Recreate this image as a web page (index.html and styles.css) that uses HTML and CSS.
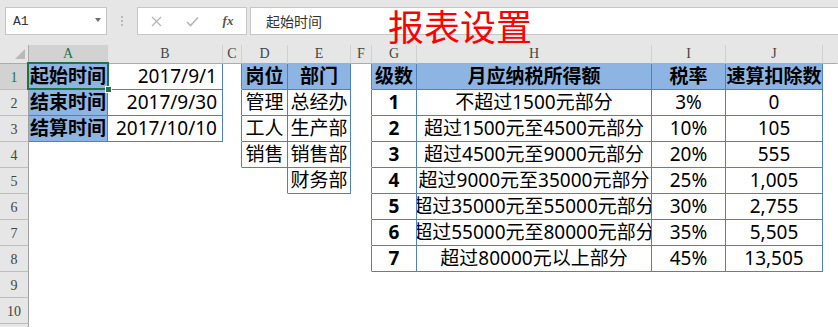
FILE: index.html
```html
<!DOCTYPE html>
<html lang="zh-CN">
<head>
<meta charset="utf-8">
<title>报表设置</title>
<link rel="stylesheet" href="styles.css">
</head>
<body>
<div class="app">
  <div class="fbar">
    <div class="namebox"><span>A1</span><span class="arrow"></span></div>
    <div class="dots"><i></i><i></i><i></i></div>
    <div class="fbtns">
      <span class="fb"><svg width="11" height="11" viewBox="0 0 11 11"><path d="M1 1L10 10M10 1L1 10" stroke="#b5b5b5" stroke-width="1.3" fill="none"/></svg></span>
      <span class="fb"><svg width="13" height="11" viewBox="0 0 13 11"><path d="M1 6L4.5 9.5L12 1.5" stroke="#b5b5b5" stroke-width="1.6" fill="none"/></svg></span>
      <span class="fb fx">fx</span>
    </div>
    <div class="finput">起始时间</div>
  </div>

  <div class="title">报表设置</div>

  <div class="sheet">
    <div class="row hdr">
      <div class="c ch corner"><svg width="10" height="10" viewBox="0 0 10 10"><polygon points="10,0 10,10 0,10" fill="#b9b9b9"/></svg></div>
      <div class="c ch sel-col">A</div>
      <div class="c ch">B</div>
      <div class="c ch">C</div>
      <div class="c ch">D</div>
      <div class="c ch">E</div>
      <div class="c ch">F</div>
      <div class="c ch">G</div>
      <div class="c ch">H</div>
      <div class="c ch">I</div>
      <div class="c ch">J</div>
      <div class="c ch last"></div>
    </div>

    <div class="row">
      <div class="c rh sel-row">1</div>
      <div class="c t h l">起始时间</div>
      <div class="c t r">2017/9/1</div>
      <div class="c bl"></div>
      <div class="c t h">岗位</div>
      <div class="c t h">部门</div>
      <div class="c bl"></div>
      <div class="c t h">级数</div>
      <div class="c t h">月应纳税所得额</div>
      <div class="c t h">税率</div>
      <div class="c t h">速算扣除数</div>
    </div>

    <div class="row">
      <div class="c rh">2</div>
      <div class="c t h l">结束时间</div>
      <div class="c t r">2017/9/30</div>
      <div class="c bl"></div>
      <div class="c t">管理</div>
      <div class="c t">总经办</div>
      <div class="c bl"></div>
      <div class="c t b">1</div>
      <div class="c t">不超过1500元部分</div>
      <div class="c t">3%</div>
      <div class="c t">0</div>
    </div>

    <div class="row">
      <div class="c rh">3</div>
      <div class="c t h l">结算时间</div>
      <div class="c t r">2017/10/10</div>
      <div class="c bl"></div>
      <div class="c t">工人</div>
      <div class="c t">生产部</div>
      <div class="c bl"></div>
      <div class="c t b">2</div>
      <div class="c t">超过1500元至4500元部分</div>
      <div class="c t">10%</div>
      <div class="c t">105</div>
    </div>

    <div class="row">
      <div class="c rh">4</div>
      <div class="c"></div>
      <div class="c"></div>
      <div class="c bl"></div>
      <div class="c t">销售</div>
      <div class="c t">销售部</div>
      <div class="c bl"></div>
      <div class="c t b">3</div>
      <div class="c t">超过4500元至9000元部分</div>
      <div class="c t">20%</div>
      <div class="c t">555</div>
    </div>

    <div class="row">
      <div class="c rh">5</div>
      <div class="c"></div>
      <div class="c"></div>
      <div class="c"></div>
      <div class="c bl"></div>
      <div class="c t">财务部</div>
      <div class="c bl"></div>
      <div class="c t b">4</div>
      <div class="c t">超过9000元至35000元部分</div>
      <div class="c t">25%</div>
      <div class="c t">1,005</div>
    </div>

    <div class="row">
      <div class="c rh">6</div>
      <div class="c"></div>
      <div class="c"></div>
      <div class="c"></div>
      <div class="c"></div>
      <div class="c"></div>
      <div class="c bl"></div>
      <div class="c t b">5</div>
      <div class="c t">超过35000元至55000元部分</div>
      <div class="c t">30%</div>
      <div class="c t">2,755</div>
    </div>

    <div class="row">
      <div class="c rh">7</div>
      <div class="c"></div>
      <div class="c"></div>
      <div class="c"></div>
      <div class="c"></div>
      <div class="c"></div>
      <div class="c bl"></div>
      <div class="c t b">6</div>
      <div class="c t">超过55000元至80000元部分</div>
      <div class="c t">35%</div>
      <div class="c t">5,505</div>
    </div>

    <div class="row">
      <div class="c rh">8</div>
      <div class="c"></div>
      <div class="c"></div>
      <div class="c"></div>
      <div class="c"></div>
      <div class="c"></div>
      <div class="c bl"></div>
      <div class="c t b">7</div>
      <div class="c t">超过80000元以上部分</div>
      <div class="c t">45%</div>
      <div class="c t">13,505</div>
    </div>

    <div class="row"><div class="c rh">9</div></div>
    <div class="row"><div class="c rh">10</div></div>
    <div class="row"><div class="c rh">11</div></div>

    <div class="selection"><span class="handle"></span></div>
  </div>
</div>
</body>
</html>
```

FILE: styles.css
```css
* {
  box-sizing: border-box;
  margin: 0;
  padding: 0;
}

body {
  width: 838px;
  height: 327px;
  overflow: hidden;
  background: #ffffff;
  font-family: "Noto Sans", "Noto Sans CJK SC", sans-serif;
}

.app {
  position: relative;
}

/* formula bar */
.fbar {
  height: 45px;
  background: #e6e6e6;
  display: flex;
  align-items: flex-start;
  padding-top: 7px;
  padding-left: 5px;
}

.namebox {
  width: 102px;
  height: 28px;
  background: #ffffff;
  border: 1px solid #c6c6c6;
  display: flex;
  align-items: center;
  justify-content: space-between;
  padding: 0 5px 0 7px;
  font-family: "Liberation Mono", monospace;
  font-size: 13px;
  color: #333333;
}

.arrow {
  width: 0;
  height: 0;
  border-left: 3px solid transparent;
  border-right: 3px solid transparent;
  border-top: 4px solid #6d6d6d;
  margin-top: -2px;
}

.dots {
  width: 30px;
  height: 28px;
  display: flex;
  flex-direction: column;
  align-items: center;
  justify-content: center;
  gap: 2px;
}

.dots i {
  display: block;
  width: 2px;
  height: 2px;
  background: #b9b9b9;
}

.fbtns {
  width: 110px;
  height: 28px;
  background: #ffffff;
  border: 1px solid #c6c6c6;
  display: flex;
  align-items: center;
}

.fb {
  width: 36px;
  display: flex;
  justify-content: center;
  align-items: center;
}

.fx {
  font-family: "Liberation Serif", serif;
  font-style: italic;
  font-weight: bold;
  font-size: 13px;
  color: #555555;
}

.finput {
  flex: 1;
  margin-left: 3px;
  height: 28px;
  background: #ffffff;
  border: 1px solid #c6c6c6;
  border-right: none;
  padding-left: 15px;
  font-family: "Noto Sans CJK SC", sans-serif;
  font-size: 14px;
  line-height: 26px;
  color: #333333;
}

.title {
  position: absolute;
  left: 388px;
  top: 7px;
  font-family: "Noto Sans CJK SC", sans-serif;
  font-size: 36px;
  line-height: 36px;
  color: #ff0000;
  z-index: 5;
}

/* sheet grid */
.sheet {
  position: relative;
}

.row {
  display: grid;
  grid-template-columns: 29px 79px 115px 19px 46px 63px 21px 45px 235px 74px 97px 1fr;
  height: 26px;
}

.row.hdr {
  height: 19px;
}

.c {
  border-right: 1px solid transparent;
  border-bottom: 1px solid transparent;
  display: flex;
  align-items: center;
  justify-content: center;
  white-space: nowrap;
  overflow: hidden;
  font-size: 19px;
  line-height: 25px;
  color: #000000;
}

.ch {
  background: #e6e6e6;
  border-right-color: #d0d0d0;
  border-bottom-color: #ababab;
  font-family: "Liberation Serif", serif;
  font-size: 14px;
  line-height: 18px;
  color: #444444;
}

.ch.last {
  border-right-color: transparent;
}

.corner {
  justify-content: flex-end;
  align-items: flex-end;
  padding: 0 3px 4px 0;
  border-right-color: #ababab;
}

.rh {
  background: #e6e6e6;
  border-right-color: #9e9e9e;
  border-bottom-color: #bdbdbd;
  font-family: "Liberation Serif", serif;
  font-size: 14px;
  line-height: 16px;
  color: #444444;
  align-items: flex-end;
  padding-bottom: 3px;
}

.sel-col {
  background: #d2d2d2;
  color: #217346;
  border-bottom-color: #217346;
}

.sel-row {
  background: #d2d2d2;
  color: #217346;
  border-right-color: #217346;
}

.t {
  border-right-color: #4f81bd;
  border-bottom-color: #4f81bd;
}

.bl {
  border-right-color: #4f81bd;
}

.h {
  background: #8db4e2;
  font-weight: bold;
}

.b {
  font-weight: bold;
}

.l {
  justify-content: flex-start;
  padding-left: 1px;
}

.r {
  justify-content: flex-end;
  padding-right: 5px;
}

.selection {
  position: absolute;
  left: 27px;
  top: 17px;
  width: 82px;
  height: 28px;
  border: 2px solid #217346;
  z-index: 3;
}

.handle {
  position: absolute;
  right: -5px;
  bottom: -5px;
  width: 7px;
  height: 7px;
  background: #217346;
  border: 1px solid #ffffff;
}
```
